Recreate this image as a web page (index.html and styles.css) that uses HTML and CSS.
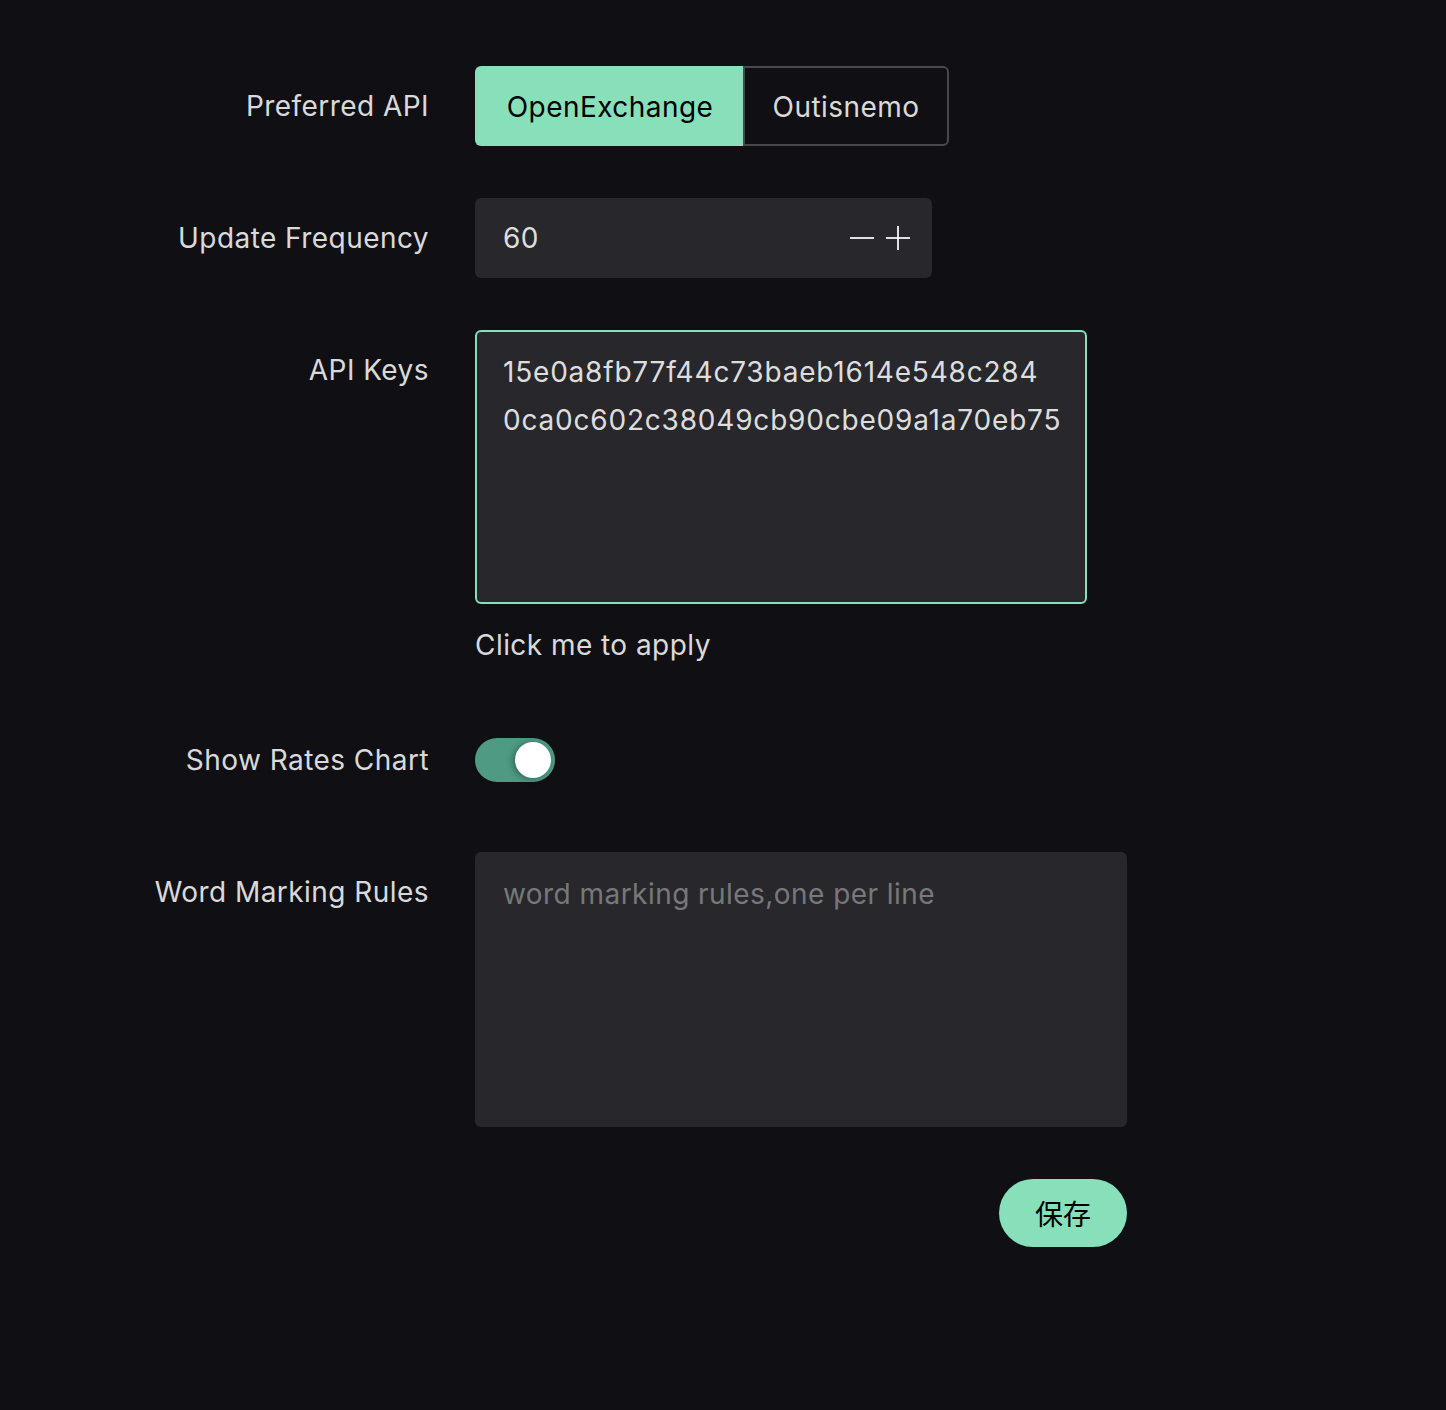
FILE: index.html
```html
<!DOCTYPE html>
<html lang="en">
<head>
<meta charset="utf-8">
<title>Settings</title>
<link rel="stylesheet" href="styles.css">
</head>
<body>
<div class="form">
  <div class="row row-single">
    <div class="label">Preferred API</div>
    <div class="control">
      <div class="radio-group">
        <div class="radio-btn radio-active radio-first">OpenExchange</div>
        <div class="radio-btn radio-second">Outisnemo</div>
      </div>
    </div>
  </div>

  <div class="row row-single">
    <div class="label">Update Frequency</div>
    <div class="control">
      <div class="number-input">
        <span class="number-value">60</span>
        <span class="number-btns">
          <svg class="icon" width="24" height="24" viewBox="0 0 24 24"><line x1="0" y1="12" x2="24" y2="12" stroke="currentColor" stroke-width="2"/></svg>
          <svg class="icon" width="24" height="24" viewBox="0 0 24 24"><line x1="0" y1="12" x2="24" y2="12" stroke="currentColor" stroke-width="2"/><line x1="12" y1="0" x2="12" y2="24" stroke="currentColor" stroke-width="2"/></svg>
        </span>
      </div>
    </div>
  </div>

  <div class="row row-keys">
    <div class="label">API Keys</div>
    <div class="control">
      <div class="textarea textarea-focus keys">15e0a8fb77f44c73baeb1614e548c284<br>0ca0c602c38049cb90cbe09a1a70eb75</div>
      <div class="hint">Click me to apply</div>
    </div>
  </div>

  <div class="row row-single">
    <div class="label">Show Rates Chart</div>
    <div class="control control-center">
      <div class="switch"><span class="knob"></span></div>
    </div>
  </div>

  <div class="row">
    <div class="label">Word Marking Rules</div>
    <div class="control">
      <div class="textarea textarea-wide"><span class="placeholder">word marking rules,one per line</span></div>
    </div>
  </div>

  <div class="row row-actions">
    <div class="label"></div>
    <div class="control control-end">
      <button class="save-btn">保存</button>
    </div>
  </div>
</div>
</body>
</html>
```

FILE: styles.css
```css
html, body {
  margin: 0;
  padding: 0;
  background: #101014;
}
body {
  font-family: Inter, "Noto Sans", "Noto Sans CJK SC", sans-serif;
  font-size: 28px;
  letter-spacing: 0.45px;
  color: rgba(255, 255, 255, 0.86);
  min-height: 1410px;
}
.form {
  padding-top: 66px;
  display: flex;
  flex-direction: column;
  gap: 52px;
}
.row {
  display: flex;
  align-items: flex-start;
}
.label {
  width: 429px;
  flex: none;
  text-align: right;
  line-height: 80px;
  height: 80px;
  margin-right: 46px;
  white-space: nowrap;
}
.control {
  width: 652px;
  display: flex;
  flex-direction: column;
}
.control-center {
  height: 80px;
  justify-content: center;
}
.control-end {
  align-items: flex-end;
}
.row-keys {
  margin-bottom: 3px;
}

/* radio group */
.radio-group {
  display: flex;
  height: 80px;
}
.radio-btn {
  box-sizing: border-box;
  height: 80px;
  line-height: 79px;
  text-align: center;
  border: 2px solid rgba(255, 255, 255, 0.24);
  color: rgba(255, 255, 255, 0.86);
}
.radio-first {
  width: 268px;
  border-radius: 6px 0 0 6px;
  border-right: none;
}
.radio-second {
  width: 206px;
  border-radius: 0 6px 6px 0;
}
.radio-active {
  background: #88e0bb;
  border-color: #88e0bb;
  color: #000;
}

/* number input */
.number-input {
  box-sizing: border-box;
  width: 457px;
  height: 80px;
  background: #28282c;
  border-radius: 6px;
  display: flex;
  align-items: center;
  justify-content: space-between;
  padding: 0 22px 0 28px;
}
.number-btns {
  display: flex;
  gap: 12px;
  color: rgba(255, 255, 255, 0.86);
}
.icon {
  display: block;
}

/* textarea */
.textarea {
  box-sizing: border-box;
  width: 612px;
  height: 274px;
  background: #28282c;
  border: 2px solid transparent;
  border-radius: 6px;
  padding: 16px 26px;
  line-height: 48px;
  white-space: nowrap;
}
.keys {
  letter-spacing: 0.8px;
}
.textarea-focus {
  border-color: #88e0bb;
}
.textarea-wide {
  width: 652px;
  height: 275px;
}
.placeholder {
  color: rgba(255, 255, 255, 0.38);
}
.hint {
  margin-top: 21px;
  line-height: 40px;
  height: 40px;
}

/* switch */
.switch {
  position: relative;
  width: 80px;
  height: 44px;
  border-radius: 22px;
  background: #4e9a82;
}
.knob {
  position: absolute;
  top: 4px;
  right: 4px;
  width: 36px;
  height: 36px;
  border-radius: 50%;
  background: #fff;
  box-shadow: -2px 1px 6px rgba(0, 0, 0, 0.35);
}

/* save */
.row-actions .label {
  height: 68px;
}
.save-btn {
  width: 128px;
  height: 68px;
  border: none;
  border-radius: 34px;
  background: #88e0bb;
  color: #000;
  font-family: "Noto Sans CJK SC", sans-serif;
  font-size: 28px;
  letter-spacing: 0;
  padding: 0;
  cursor: pointer;
}
```
